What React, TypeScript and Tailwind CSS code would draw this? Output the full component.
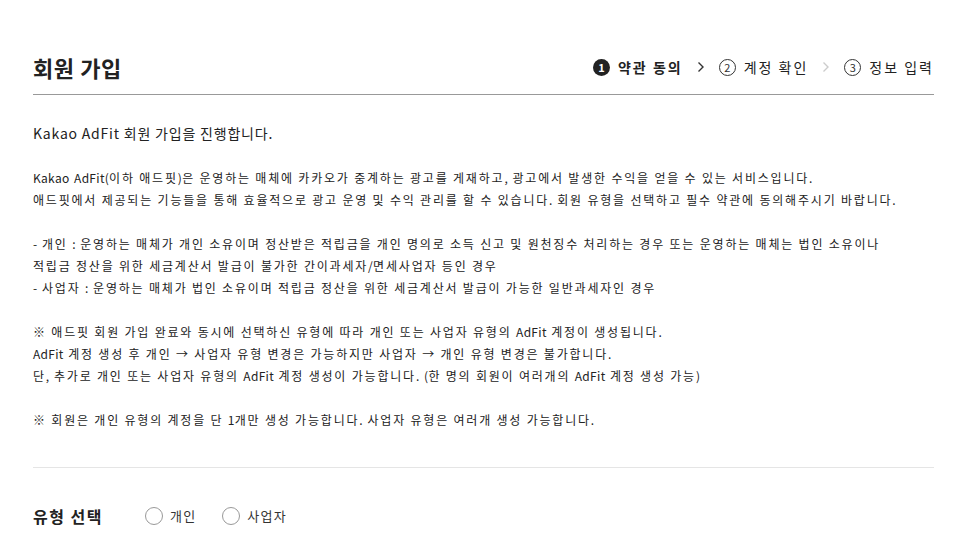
import React from "react";

const font = { fontFamily: '"Noto Sans CJK KR", "Noto Sans", sans-serif' };

function Step({ n, label, active }: { n: string; label: string; active?: boolean }) {
  return (
    <div className="flex items-center gap-[8px]">
      {active ? (
        <span className="flex h-[17px] w-[17px] items-center justify-center rounded-full bg-[#222] text-[11px] font-bold leading-none text-white">
          {n}
        </span>
      ) : (
        <span className="flex h-[17px] w-[17px] items-center justify-center rounded-full border border-[#333] text-[11px] leading-none text-[#333]">
          {n}
        </span>
      )}
      <span className={`text-[14px] leading-none tracking-[2px] text-[#222] ${active ? "font-bold" : ""}`}>{label}</span>
    </div>
  );
}

function Chevron({ color }: { color: string }) {
  return (
    <svg width="8" height="12" viewBox="0 0 8 12" fill="none">
      <path d="M1.5 1.5 L6 6 L1.5 10.5" stroke={color} strokeWidth="1.4" />
    </svg>
  );
}

function Radio({ label }: { label: string }) {
  return (
    <label className="flex items-center gap-[7px]">
      <span className="h-[18px] w-[18px] rounded-full border border-[#999] bg-white" />
      <span className="text-[13px] tracking-[1.2px] text-[#333]">{label}</span>
    </label>
  );
}

function Spaced({ text }: { text: string }) {
  const parts = text.match(/[A-Za-z0-9(),.:/\-]+|[^A-Za-z0-9(),.:/\-]+/g) || [];
  return (
    <>
      {parts.map((p, i) =>
        /^[A-Za-z0-9(),.:/\-]+$/.test(p) ? (
          <span key={i} className="tracking-[0.3px]">
            {p}
          </span>
        ) : (
          <span key={i}>{p}</span>
        )
      )}
    </>
  );
}

export default function App() {
  const lines1 = [
    "Kakao AdFit(이하 애드핏)은 운영하는 매체에 카카오가 중계하는 광고를 게재하고, 광고에서 발생한 수익을 얻을 수 있는 서비스입니다.",
    "애드핏에서 제공되는 기능들을 통해 효율적으로 광고 운영 및 수익 관리를 할 수 있습니다. 회원 유형을 선택하고 필수 약관에 동의해주시기 바랍니다.",
  ];
  const lines2 = [
    "- 개인 : 운영하는 매체가 개인 소유이며 정산받은 적립금을 개인 명의로 소득 신고 및 원천징수 처리하는 경우 또는 운영하는 매체는 법인 소유이나",
    "적립금 정산을 위한 세금계산서 발급이 불가한 간이과세자/면세사업자 등인 경우",
    "- 사업자 : 운영하는 매체가 법인 소유이며 적립금 정산을 위한 세금계산서 발급이 가능한 일반과세자인 경우",
  ];
  const lines3 = [
    "※ 애드핏 회원 가입 완료와 동시에 선택하신 유형에 따라 개인 또는 사업자 유형의 AdFit 계정이 생성됩니다.",
    "AdFit 계정 생성 후 개인 → 사업자 유형 변경은 가능하지만 사업자 → 개인 유형 변경은 불가합니다.",
    "단, 추가로 개인 또는 사업자 유형의 AdFit 계정 생성이 가능합니다. (한 명의 회원이 여러개의 AdFit 계정 생성 가능)",
  ];
  const lines4 = ["※ 회원은 개인 유형의 계정을 단 1개만 생성 가능합니다. 사업자 유형은 여러개 생성 가능합니다."];

  const Block = ({ lines }: { lines: string[] }) => (
    <div>
      {lines.map((l, i) => (
        <p key={i} className="h-[22px] text-[12px] leading-[22px] tracking-[1.8px] text-[#222] whitespace-nowrap">
          <Spaced text={l} />
        </p>
      ))}
    </div>
  );

  return (
    <div className="min-h-[547px] w-[957px] bg-white" style={font}>
      <div className="mx-[33px] w-[901px] pt-[53px]">
        <div className="flex items-center justify-between border-b border-[#999] pb-[13px]">
          <h1 className="text-[22px] font-bold leading-[28px] tracking-[0.6px] text-[#222]">회원 가입</h1>
          <div className="flex items-center gap-[14px]">
            <Step n="1" label="약관 동의" active />
            <Chevron color="#333" />
            <Step n="2" label="계정 확인" />
            <Chevron color="#ccc" />
            <Step n="3" label="정보 입력" />
          </div>
        </div>
        <div className="border-b border-[#e5e5e5] pb-[36px] pt-[27px]">
          <p className="text-[14px] leading-[22px] tracking-[0.8px] text-[#222]">Kakao AdFit 회원 가입을 진행합니다.</p>
          <div className="mt-[23px] flex flex-col gap-[22px]">
            <Block lines={lines1} />
            <Block lines={lines2} />
            <Block lines={lines3} />
            <Block lines={lines4} />
          </div>
        </div>
        <div className="flex items-center pt-[36px]">
          <span className="w-[112px] text-[16px] font-bold leading-[24px] tracking-[1.5px] text-[#222]">유형 선택</span>
          <div className="flex items-center gap-[26px]">
            <Radio label="개인" />
            <Radio label="사업자" />
          </div>
        </div>
      </div>
    </div>
  );
}
